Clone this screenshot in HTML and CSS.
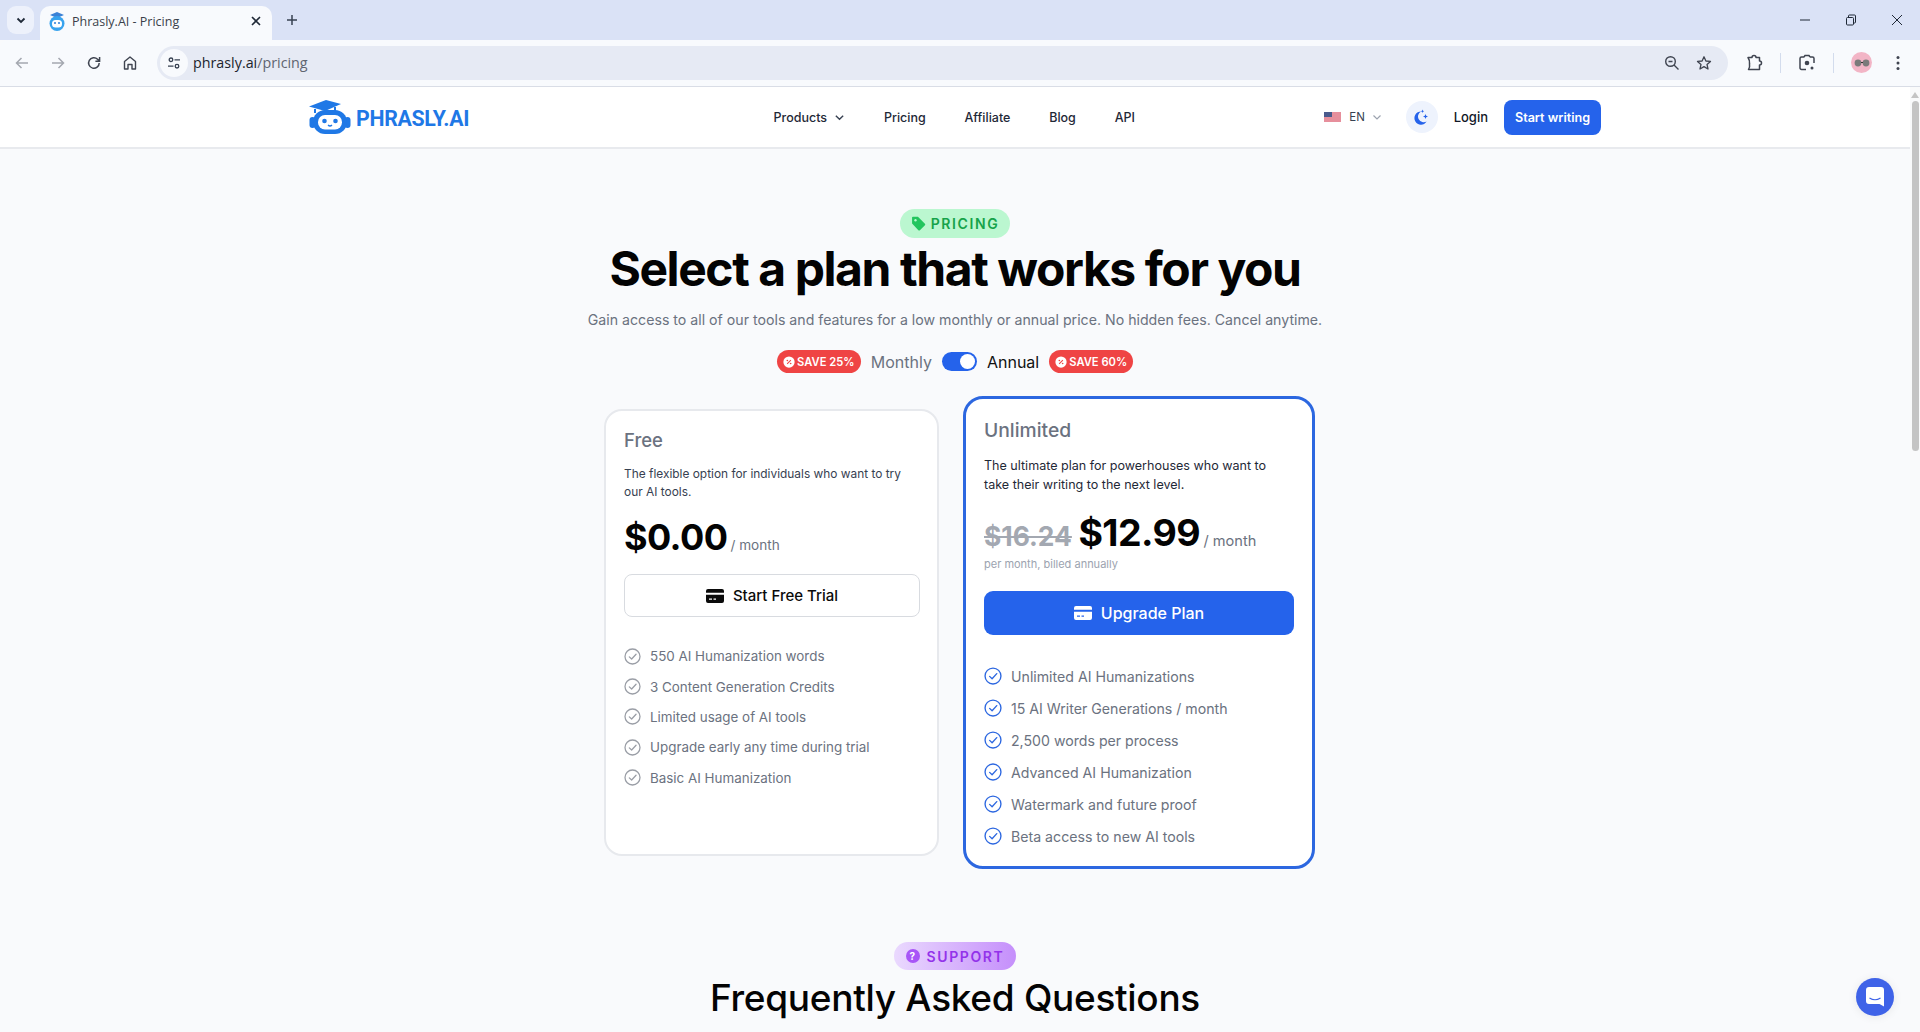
FILE: index.html
```html
<!DOCTYPE html>
<html lang="en">
<head>
    <meta charset="UTF-8">
    <meta name="viewport" content="width=device-width, initial-scale=1.0">
    <title>Phrasly.AI - Pricing</title>
    <link rel="stylesheet" href="styles.css">
</head>
<body>
    <svg class="defs" width="0" height="0">
        <symbol id="robot" viewBox="0 0 42 34">
            <path d="M0 6.5 L17 0 L32 4 L16 11 Z" fill="#1f78e6"/>
            <path d="M6 9 V13 M26 7 V11" stroke="#1f78e6" stroke-width="2" fill="none"/>
            <rect x="0.5" y="17" width="6" height="11" rx="3" fill="#1f78e6"/>
            <rect x="35.5" y="17" width="6" height="11" rx="3" fill="#1f78e6"/>
            <rect x="4" y="10" width="34" height="24" rx="12" fill="#1f78e6"/>
            <rect x="9" y="15" width="24" height="14.5" rx="7" fill="#fff"/>
            <circle cx="15.5" cy="21" r="2.3" fill="#1f78e6"/>
            <circle cx="26.5" cy="21" r="2.3" fill="#1f78e6"/>
            <path d="M19 25 Q21 27 23 25" stroke="#1f78e6" stroke-width="1.3" fill="none"/>
        </symbol>
        <symbol id="favicon" viewBox="0 0 18 20">
            <path d="M2 4 L9 1 L16 4 L9 7 Z" fill="#3b82d6"/>
            <circle cx="9" cy="12.5" r="7.5" fill="#38a3ee"/>
            <rect x="4" y="9" width="10" height="7.5" rx="3.5" fill="#fff"/>
            <circle cx="7" cy="12" r="1" fill="#2b7fd8"/>
            <circle cx="11" cy="12" r="1" fill="#2b7fd8"/>
        </symbol>
        <symbol id="check" viewBox="0 0 24 24">
            <circle cx="12" cy="12" r="10.6" fill="none" stroke="currentColor" stroke-width="1.8"/>
            <path d="M7.5 12.5 L10.8 15.6 L17 8.8" fill="none" stroke="currentColor" stroke-width="1.8" stroke-linecap="round" stroke-linejoin="round"/>
        </symbol>
        <symbol id="card" viewBox="0 0 18 14">
            <path fill-rule="evenodd" d="M2 0 H16 A2 2 0 0 1 18 2 V3.8 H0 V2 A2 2 0 0 1 2 0 Z M0 5.8 H18 V12 A2 2 0 0 1 16 14 H2 A2 2 0 0 1 0 12 Z M3 9.6 V10.8 H6 V9.6 Z M7.5 9.6 V10.8 H10 V9.6 Z" fill="currentColor"/>
        </symbol>
        <symbol id="save" viewBox="0 0 16 16">
            <circle cx="8" cy="8" r="7.5" fill="#fff"/>
            <path d="M5.5 10.5 L10.5 5.5" stroke="#ef4444" stroke-width="1.4"/>
            <circle cx="5.8" cy="6" r="1.1" fill="#ef4444"/>
            <circle cx="10.2" cy="10" r="1.1" fill="#ef4444"/>
        </symbol>
    </svg>

    <!-- Browser tab strip -->
    <div class="tabstrip">
        <div class="tab-search">
            <svg width="12" height="12" viewBox="0 0 12 12"><path d="M2.5 4.5 L6 8 L9.5 4.5" fill="none" stroke="#1f2937" stroke-width="1.8"/></svg>
        </div>
        <div class="tab">
            <svg class="favicon" width="18" height="20"><use href="#favicon"/></svg>
            <span class="tab-title">Phrasly.AI - Pricing</span>
            <svg width="12" height="12" viewBox="0 0 12 12"><path d="M2 2 L10 10 M10 2 L2 10" stroke="#1f2937" stroke-width="1.6"/></svg>
        </div>
        <svg class="new-tab" width="14" height="14" viewBox="0 0 14 14"><path d="M7 2 V12 M2 7 H12" stroke="#374151" stroke-width="1.5"/></svg>
        <div class="win-controls">
            <svg width="12" height="12" viewBox="0 0 12 12"><path d="M1 6 H11" stroke="#1f2937"/></svg>
            <svg width="12" height="12" viewBox="0 0 12 12"><rect x="1.5" y="3.5" width="7" height="7.5" rx="1" fill="none" stroke="#1f2937"/><path d="M3.5 3.5 V2 A1 1 0 0 1 4.5 1 H9.5 A1 1 0 0 1 10.5 2 V8 A1 1 0 0 1 9.5 9 H8.5" fill="none" stroke="#1f2937"/></svg>
            <svg width="12" height="12" viewBox="0 0 12 12"><path d="M1 1 L11 11 M11 1 L1 11" stroke="#1f2937"/></svg>
        </div>
    </div>

    <!-- Browser toolbar -->
    <div class="toolbar">
        <div class="tool-buttons">
            <svg width="16" height="16" viewBox="0 0 16 16"><path d="M14 8 H2.5 M7.5 3 L2.5 8 L7.5 13" fill="none" stroke="#a4a8b0" stroke-width="1.5"/></svg>
            <svg width="16" height="16" viewBox="0 0 16 16"><path d="M2 8 H13.5 M8.5 3 L13.5 8 L8.5 13" fill="none" stroke="#a4a8b0" stroke-width="1.5"/></svg>
            <svg width="16" height="16" viewBox="0 0 16 16"><path d="M13.2 8 A5.3 5.3 0 1 1 11.6 4.2 L13.4 6 M13.6 2 V6.2 H9.4" fill="none" stroke="#3f4450" stroke-width="1.5"/></svg>
            <svg width="16" height="16" viewBox="0 0 16 16"><path d="M2.5 14 V6.5 L8 2 L13.5 6.5 V14 H10 V9.5 H6 V14 Z" fill="none" stroke="#3f4450" stroke-width="1.4" stroke-linejoin="round"/></svg>
        </div>
        <div class="omnibox">
            <span class="site-info">
                <svg width="14" height="14" viewBox="0 0 14 14"><circle cx="4" cy="3.8" r="1.8" fill="none" stroke="#374151" stroke-width="1.3"/><path d="M7.5 3.8 H13 M1 10.2 H6.5" stroke="#374151" stroke-width="1.3"/><circle cx="10" cy="10.2" r="1.8" fill="none" stroke="#374151" stroke-width="1.3"/></svg>
            </span>
            <span class="url">phrasly.ai<span class="url-path">/pricing</span></span>
            <span class="omni-icons">
                <svg width="16" height="16" viewBox="0 0 16 16"><circle cx="6.5" cy="6.5" r="4.8" fill="none" stroke="#3f4450" stroke-width="1.4"/><path d="M10 10 L14.5 14.5 M4.5 6.5 H8.5" stroke="#3f4450" stroke-width="1.4"/></svg>
                <svg width="16" height="16" viewBox="0 0 16 16"><path d="M8 1.8 L9.9 6 L14.5 6.4 L11 9.4 L12 14 L8 11.6 L4 14 L5 9.4 L1.5 6.4 L6.1 6 Z" fill="none" stroke="#3f4450" stroke-width="1.3" stroke-linejoin="round"/></svg>
            </span>
        </div>
        <div class="tool-right">
            <svg width="18" height="18" viewBox="0 0 18 18"><path d="M3 3.5 H7 A2 2 0 0 1 11 3.5 H14.5 V7 A2 2 0 0 1 14.5 11 V15.5 H3.5 A9 9 0 0 0 4.5 9.5 A9 9 0 0 0 3 3.5 Z" fill="none" stroke="#3f4450" stroke-width="1.5" stroke-linejoin="round"/></svg>
            <span class="tool-sep"></span>
            <svg width="18" height="18" viewBox="0 0 18 18"><path d="M6 3 H3.5 A1.5 1.5 0 0 0 2 4.5 V14 A1.5 1.5 0 0 0 3.5 15.5 H8 M12 3 H14.5 A1.5 1.5 0 0 1 16 4.5 V9 M6 3 L7 1.5 H11 L12 3" fill="none" stroke="#3f4450" stroke-width="1.5"/><circle cx="9" cy="9" r="2.3" fill="#3f4450"/><circle cx="14" cy="14" r="1.5" fill="#3f4450"/></svg>
            <span class="tool-sep"></span>
            <span class="avatar">
                <svg width="16" height="8" viewBox="0 0 16 8"><circle cx="4" cy="4" r="3.4" fill="#7a7a7a"/><circle cx="12" cy="4" r="3.4" fill="#7a7a7a"/><path d="M7 3.5 H9" stroke="#333"/></svg>
            </span>
            <svg class="menu-dots" width="4" height="16" viewBox="0 0 4 16"><circle cx="2" cy="2.5" r="1.5" fill="#3f4450"/><circle cx="2" cy="8" r="1.5" fill="#3f4450"/><circle cx="2" cy="13.5" r="1.5" fill="#3f4450"/></svg>
        </div>
    </div>

    <div class="viewport">
        <div class="page">
            <!-- Navbar -->
            <header class="navbar">
                <a class="logo">
                    <svg width="42" height="34"><use href="#robot"/></svg>
                    <span class="logo-text">PHRASLY.AI</span>
                </a>
                <nav class="nav-links">
                    <a class="nav-link nav-products">Products
                        <svg width="11" height="11" viewBox="0 0 12 12"><path d="M2 4 L6 8 L10 4" fill="none" stroke="#374151" stroke-width="1.5"/></svg>
                    </a>
                    <a class="nav-link">Pricing</a>
                    <a class="nav-link">Affiliate</a>
                    <a class="nav-link">Blog</a>
                    <a class="nav-link">API</a>
                </nav>
                <div class="nav-right">
                    <div class="lang">
                        <svg width="17" height="10" viewBox="0 0 17 10"><rect width="17" height="10" fill="#f5c6cc"/><path d="M0 1 H17 M0 3 H17 M0 5 H17 M0 7 H17 M0 9 H17" stroke="#d8596c" stroke-width="1"/><rect width="8" height="5" fill="#4a5a8c"/></svg>
                        <span>EN</span>
                        <svg width="10" height="10" viewBox="0 0 10 10"><path d="M1.5 3.5 L5 7 L8.5 3.5" fill="none" stroke="#9ca3af" stroke-width="1.2"/></svg>
                    </div>
                    <span class="theme-btn">
                        <svg width="15" height="16" viewBox="0 0 15 16"><path d="M7 2.5 A6.6 6.6 0 1 0 12.6 12.6 A5.6 5.6 0 0 1 7 2.5 Z" fill="#2563eb"/><path d="M11.5 5 L12.2 6.8 L14 7.5 L12.2 8.2 L11.5 10 L10.8 8.2 L9 7.5 L10.8 6.8 Z" fill="#2563eb"/><path d="M8.5 0.5 L9 1.8 L10.2 2.3 L9 2.8 L8.5 4 L8 2.8 L6.8 2.3 L8 1.8 Z" fill="#2563eb"/></svg>
                    </span>
                    <a class="login">Login</a>
                    <a class="start-btn">Start writing</a>
                </div>
            </header>

            <!-- Pricing -->
            <section class="pricing">
                <span class="pill pill-green">
                    <svg width="15" height="15" viewBox="0 0 14 14"><path d="M1 1.5 A0.8 0.8 0 0 1 1.8 0.7 H6.5 L13 7.2 A1 1 0 0 1 13 8.6 L8.3 13.2 A1 1 0 0 1 6.9 13.2 L1 7 Z" fill="#22c55e"/><circle cx="4.2" cy="4" r="1.1" fill="#bbf7d0"/></svg>
                    PRICING
                </span>
                <h1>Select a plan that works for you</h1>
                <p class="subtitle">Gain access to all of our tools and features for a low monthly or annual price. No hidden fees. Cancel anytime.</p>
                <div class="billing">
                    <span class="save"><svg width="12" height="12"><use href="#save"/></svg>SAVE 25%</span>
                    <span class="billing-label">Monthly</span>
                    <span class="switch"><span class="knob"></span></span>
                    <span class="billing-label active">Annual</span>
                    <span class="save"><svg width="12" height="12"><use href="#save"/></svg>SAVE 60%</span>
                </div>

                <div class="plans">
                    <div class="plan plan-free">
                        <h2>Free</h2>
                        <p class="plan-desc">The flexible option for individuals who want to try our AI tools.</p>
                        <div class="price"><strong>$0.00</strong> <span class="per">/ month</span></div>
                        <a class="plan-btn">
                            <svg width="18" height="14"><use href="#card"/></svg>
                            Start Free Trial
                        </a>
                        <ul class="features">
                            <li><svg><use href="#check"/></svg>550 AI Humanization words</li>
                            <li><svg><use href="#check"/></svg>3 Content Generation Credits</li>
                            <li><svg><use href="#check"/></svg>Limited usage of AI tools</li>
                            <li><svg><use href="#check"/></svg>Upgrade early any time during trial</li>
                            <li><svg><use href="#check"/></svg>Basic AI Humanization</li>
                        </ul>
                    </div>
                    <div class="plan plan-pro">
                        <h2>Unlimited</h2>
                        <p class="plan-desc">The ultimate plan for powerhouses who want to take their writing to the next level.</p>
                        <div class="price"><s>$16.24</s> <strong>$12.99</strong> <span class="per">/ month</span></div>
                        <p class="billed">per month, billed annually</p>
                        <a class="plan-btn">
                            <svg width="18" height="14"><use href="#card"/></svg>
                            Upgrade Plan
                        </a>
                        <ul class="features">
                            <li><svg><use href="#check"/></svg>Unlimited AI Humanizations</li>
                            <li><svg><use href="#check"/></svg>15 AI Writer Generations / month</li>
                            <li><svg><use href="#check"/></svg>2,500 words per process</li>
                            <li><svg><use href="#check"/></svg>Advanced AI Humanization</li>
                            <li><svg><use href="#check"/></svg>Watermark and future proof</li>
                            <li><svg><use href="#check"/></svg>Beta access to new AI tools</li>
                        </ul>
                    </div>
                </div>
            </section>

            <!-- FAQ -->
            <section class="faq">
                <span class="pill pill-purple">
                    <svg width="14" height="14" viewBox="0 0 14 14"><circle cx="7" cy="7" r="7" fill="#a855f7"/><text x="7" y="10.5" text-anchor="middle" class="q-mark">?</text></svg>
                    SUPPORT
                </span>
                <h2 class="faq-title">Frequently Asked Questions</h2>
            </section>
        </div>
        <div class="scrollbar">
            <svg width="8" height="6" viewBox="0 0 8 6"><path d="M4 0 L8 6 H0 Z" fill="#c4c4c4"/></svg>
            <span class="thumb"></span>
        </div>
    </div>

    <!-- Chat bubble -->
    <div class="chat">
        <svg width="18" height="20" viewBox="0 0 18 20"><path d="M3 0 H15 A3 3 0 0 1 18 3 V19.5 L13.5 17 H3 A3 3 0 0 1 0 14 V3 A3 3 0 0 1 3 0 Z" fill="#fff"/><path d="M3.5 11 Q9 14.5 14.5 11" fill="none" stroke="#3f63e8" stroke-width="1.2"/></svg>
    </div>
</body>
</html>
```

FILE: styles.css
```css
* {
    box-sizing: border-box;
}
html, body {
    height: 100%;
}
body {
    margin: 0;
    height: 1032px;
    overflow: hidden;
    display: flex;
    flex-direction: column;
    font-family: 'Inter', 'Liberation Sans', sans-serif;
    background-color: #f9fafc;
    color: #111;
}
h1, h2, p, ul {
    margin: 0;
    padding: 0;
}
.defs {
    position: absolute;
}

/* Browser chrome */
.tabstrip {
    height: 40px;
    flex: none;
    display: flex;
    align-items: flex-end;
    background-color: #dae2f6;
    padding-left: 7px;
}
.tab-search {
    width: 27px;
    height: 28px;
    margin-bottom: 6px;
    border-radius: 9px;
    background-color: #edf1fb;
    display: flex;
    align-items: center;
    justify-content: center;
}
.tab {
    width: 232px;
    height: 34px;
    margin-left: 6px;
    padding: 0 10px 4px 8px;
    border-radius: 10px 10px 0 0;
    background-color: #f8fafd;
    display: flex;
    align-items: center;
    font-family: 'Open Sans', sans-serif;
    font-size: 12.5px;
    color: #3a3f4a;
}
.favicon {
    margin-right: 6px;
}
.tab-title {
    flex: 1;
}
.new-tab {
    margin: 0 0 13px 13px;
}
.win-controls {
    margin-left: auto;
    width: 138px;
    height: 40px;
    padding: 0 17px;
    display: flex;
    align-items: center;
    justify-content: space-between;
}
.toolbar {
    height: 47px;
    flex: none;
    display: flex;
    align-items: center;
    background-color: #f8fafd;
    border-bottom: 1px solid #d9dde6;
    border-radius: 8px 8px 0 0;
    margin-top: 0;
    padding-bottom: 1px;
}
.tool-buttons {
    width: 157px;
    padding: 0 19px 0 14px;
    display: flex;
    justify-content: space-between;
}
.omnibox {
    width: 1571px;
    height: 34px;
    border-radius: 17px;
    background-color: #e6eaf4;
    display: flex;
    align-items: center;
    padding: 0 16px 0 3px;
}
.site-info {
    width: 28px;
    height: 28px;
    border-radius: 50%;
    background-color: #f8fafd;
    display: flex;
    align-items: center;
    justify-content: center;
}
.url {
    margin-left: 5px;
    font-family: 'Open Sans', sans-serif;
    font-size: 14.3px;
    color: #20242c;
}
.url-path {
    color: #5f6570;
}
.omni-icons {
    margin-left: auto;
    width: 48px;
    display: flex;
    justify-content: space-between;
}
.tool-right {
    flex: 1;
    display: flex;
    align-items: center;
    gap: 17px;
    padding-left: 17px;
}
.tool-sep {
    width: 1px;
    height: 20px;
    background-color: #d3dced;
}
.avatar {
    width: 21px;
    height: 21px;
    border-radius: 50%;
    background-color: #f2b5c6;
    display: flex;
    align-items: center;
    justify-content: center;
}
.menu-dots {
    margin-left: 7px;
}

/* Page */
.viewport {
    flex: 1;
    min-height: 0;
    display: flex;
}
.page {
    flex: 1;
    min-width: 0;
    overflow: hidden;
}
.scrollbar {
    width: 10px;
    flex: none;
    background-color: #f9fafb;
    display: flex;
    flex-direction: column;
    align-items: center;
    padding-top: 5px;
}
.thumb {
    width: 7px;
    height: 350px;
    margin-top: 3px;
    border-radius: 4px;
    background-color: #c4c4c4;
}

.navbar {
    height: 62px;
    padding: 0 309px 0 309px;
    background-color: #fff;
    border-bottom: 2px solid #e8eaee;
    display: flex;
    align-items: center;
    justify-content: space-between;
    position: relative;
}
.logo {
    display: flex;
    align-items: center;
    gap: 5px;
    margin-top: -1px;
}
.logo-text {
    font-family: 'Roboto', sans-serif;
    font-weight: 700;
    font-size: 21.3px;
    letter-spacing: -0.3px;
    color: #1f78e6;
    margin-top: 4px;
}
.nav-links {
    display: flex;
    align-items: center;
    gap: 38.8px;
    margin-left: 115px;
}
.nav-link {
    font-size: 12.5px;
    font-weight: 500;
    color: #1f2937;
}
.nav-products {
    display: flex;
    align-items: center;
    gap: 7px;
}
.nav-right {
    display: flex;
    align-items: center;
}
.lang {
    display: flex;
    align-items: center;
    gap: 7px;
    font-size: 11.5px;
    color: #374151;
    margin-right: 23.7px;
}
.lang svg:first-child {
    margin-right: 1px;
}
.theme-btn {
    width: 32px;
    height: 32px;
    border-radius: 50%;
    background-color: #eef3fd;
    display: flex;
    align-items: center;
    justify-content: center;
    margin-right: 16px;
}
.login {
    font-size: 13px;
    font-weight: 500;
    color: #111827;
    margin-right: 16px;
}
.start-btn {
    width: 97px;
    height: 35px;
    border-radius: 8px;
    background-color: #2563eb;
    color: #fff;
    font-size: 12.6px;
    font-weight: 600;
    display: flex;
    align-items: center;
    justify-content: center;
}

.pill {
    display: inline-flex;
    align-items: center;
    justify-content: center;
    gap: 5px;
    border-radius: 15px;
    font-size: 14px;
    font-weight: 600;
    letter-spacing: 1.6px;
}
.pill-green {
    width: 110px;
    height: 29px;
    background-color: #bbf7d0;
    color: #16a34a;
}
.pill-purple {
    width: 122px;
    height: 28px;
    gap: 7px;
    background: linear-gradient(90deg, #ead9fe, #c58ffb);
    color: #9333ea;
}
.q-mark {
    font-size: 10px;
    font-weight: 700;
    fill: #fff;
}

.pricing {
    display: flex;
    flex-direction: column;
    align-items: center;
    padding-top: 60px;
}
.pricing h1 {
    font-size: 48px;
    line-height: 48px;
    font-weight: 700;
    letter-spacing: -1.42px;
    color: #030303;
    margin-top: 7px;
}
.subtitle {
    margin-top: 16px;
    font-size: 14.16px;
    line-height: 22px;
    color: #6b7280;
}
.billing {
    margin-top: 19px;
    display: flex;
    align-items: center;
    height: 23px;
}
.save {
    width: 84px;
    height: 23px;
    border-radius: 12px;
    background-color: #ef4444;
    color: #fff;
    font-size: 11.2px;
    font-weight: 600;
    display: flex;
    align-items: center;
    justify-content: center;
    gap: 2px;
}
.billing-label {
    font-size: 16px;
    color: #6b7280;
    margin: 0 10px;
}
.billing-label.active {
    color: #111;
}
.switch {
    width: 35px;
    height: 19px;
    border-radius: 10px;
    background-color: #2563eb;
    padding: 2px;
    display: flex;
    justify-content: flex-end;
}
.knob {
    width: 15px;
    height: 15px;
    border-radius: 50%;
    background-color: #fff;
}

.plans {
    margin: 23px 0 0 9px;
    display: flex;
    align-items: center;
    gap: 24px;
}
.plan {
    background-color: #fff;
    display: flex;
    flex-direction: column;
    align-items: stretch;
}
.plan h2 {
    font-weight: 500;
    color: #6b7280;
}
.price strong {
    font-weight: 700;
    color: #030303;
    letter-spacing: -0.6px;
}
.per {
    color: #6b7280;
}
.plan-btn {
    display: flex;
    align-items: center;
    justify-content: center;
    gap: 9px;
    font-weight: 500;
}
.features {
    list-style: none;
}
.features li {
    display: flex;
    align-items: center;
    color: #6b7280;
}

.plan-free {
    width: 335px;
    height: 447px;
    padding: 16px 17px 0 18px;
    border: 2px solid #e7e9ed;
    border-radius: 18px;
}
.plan-free h2 {
    font-size: 18.5px;
    line-height: 26px;
}
.plan-free .plan-desc {
    margin-top: 12px;
    font-size: 11.9px;
    line-height: 18px;
    color: #374151;
}
.plan-free .price {
    margin-top: 15px;
    height: 42px;
    font-size: 11px;
}
.plan-free .price strong {
    font-size: 36px;
    line-height: 42px;
}
.plan-free .per {
    font-size: 13.6px;
}
.plan-free .plan-btn {
    margin-top: 16px;
    height: 43px;
    border: 1px solid #d8dbe0;
    border-radius: 8px;
    font-size: 15px;
    color: #0a0a0a;
}
.plan-free .features {
    margin-top: 24px;
}
.plan-free .features li {
    height: 30.4px;
    font-size: 13.4px;
}
.plan-free .features svg {
    width: 17px;
    height: 17px;
    margin-right: 9px;
    color: #9a9ea6;
}

.plan-pro {
    width: 352px;
    height: 473px;
    padding: 17px 18px 0 18px;
    border: 3px solid #2c67e0;
    border-radius: 20px;
}
.plan-pro h2 {
    font-size: 19.3px;
    line-height: 28px;
}
.plan-pro .plan-desc {
    margin-top: 12px;
    font-size: 12.56px;
    line-height: 19px;
    color: #1f2937;
}
.plan-pro .price {
    margin-top: 17px;
    height: 44px;
}
.plan-pro .price s {
    font-size: 26.4px;
    font-weight: 700;
    color: #a3a8b1;
    margin-right: 2px;
}
.plan-pro .price strong {
    font-size: 37.5px;
    line-height: 44px;
}
.plan-pro .per {
    font-size: 14.6px;
    margin-left: -1px;
}
.billed {
    margin-top: 1px;
    font-size: 11px;
    line-height: 16px;
    color: #9ca3af;
}
.plan-pro .plan-btn {
    margin-top: 19px;
    height: 44px;
    padding-bottom: 1px;
    border-radius: 9px;
    background-color: #2563eb;
    font-size: 16px;
    color: #fff;
}
.plan-pro .features {
    margin-top: 25px;
}
.plan-pro .features li {
    height: 32px;
    font-size: 14.15px;
}
.plan-pro .features svg {
    width: 18px;
    height: 18px;
    margin-right: 9px;
    color: #2c67e0;
}

.faq {
    margin-top: 73px;
    display: flex;
    flex-direction: column;
    align-items: center;
}
.faq-title {
    margin-top: 6px;
    font-size: 37px;
    line-height: 44px;
    font-weight: 500;
    color: #030303;
    letter-spacing: -0.3px;
}

.chat {
    position: fixed;
    left: 1856px;
    top: 978px;
    width: 38px;
    height: 38px;
    border-radius: 50%;
    background-color: #3f63e8;
    box-shadow: 0 1px 10px rgba(0,0,0,0.08);
    display: flex;
    align-items: center;
    justify-content: center;
}
```
